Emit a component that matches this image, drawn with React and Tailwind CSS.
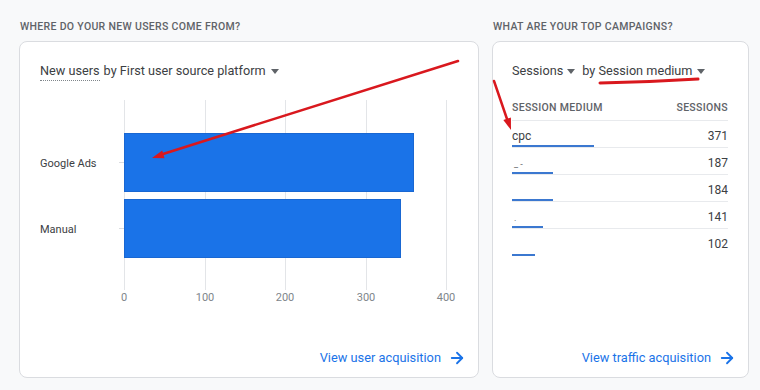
import { ArrowRight } from 'lucide-react';

const sources = [
    { label: 'Google Ads', value: 360 },
    { label: 'Manual', value: 344 },
];

const axis = [
    { value: 0, pos: 'left-[84px]' },
    { value: 100, pos: 'left-[165px]' },
    { value: 200, pos: 'left-[245px]' },
    { value: 300, pos: 'left-[326px]' },
    { value: 400, pos: 'left-[406px]' },
];

const campaigns = [
    { medium: 'cpc', sessions: 371 },
    { medium: '', mark: '_  -', sessions: 187 },
    { medium: '', sessions: 184 },
    { medium: '', mark: '.', sessions: 141 },
    { medium: '', sessions: 102 },
];

const Caret = () => (
    <span className="inline-block w-0 h-0 border-x-[4px] border-x-transparent border-t-[5px] border-t-[#5f6368]" />
);

const FooterLink = ({ children }) => (
    <div className="mt-auto flex justify-end items-center gap-[7px] pb-[9px] text-[12.8px] leading-[20px] text-[#1a73e8]">
        <span>{children}</span>
        <ArrowRight size={18} strokeWidth={2.4} />
    </div>
);

const App = () => {
    return (
        <div className="relative w-[760px] h-[390px] overflow-hidden bg-[#f8f9fa] font-['Roboto',sans-serif]">
            <div className="flex gap-[13px] pl-[19px] pt-[19px]">
                {/* New users */}
                <div className="w-[460px]">
                    <h2 className="pl-px text-[10.5px] leading-[16px] font-medium tracking-[0.03em] text-[#5f6368]">
                        WHERE DO YOUR NEW USERS COME FROM?
                    </h2>
                    <div className="mt-[6px] h-[337px] flex flex-col bg-white border border-[#dadce0] rounded-[8px] pl-[20px] pr-[12px] pt-[19px]">
                        <div className="flex items-center text-[12.7px] leading-[20px] text-[#3c4043]">
                            <span className="border-b border-dotted border-[#80868b] leading-[18px]">New users</span>
                            <span className="ml-[4px]">by First user source platform</span>
                            <span className="ml-[5px] flex items-center"><Caret /></span>
                        </div>

                        <div className="relative mt-[19px] h-[190px]">
                            {axis.map((a) => (
                                <div key={a.value} className={`absolute top-0 bottom-0 w-px bg-[#e3e5e8] ${a.pos}`} />
                            ))}
                            <div className="relative flex flex-col gap-[7px] pt-[33px]">
                                {sources.map((s) => (
                                    <div key={s.label} className="flex items-center h-[59px]">
                                        <span className="w-[79px] pt-[4px] text-[11px] text-[#3c4043]">{s.label}</span>
                                        <span className="w-[5px] h-px bg-[#dadce0]" />
                                        <div
                                            className="h-full bg-[#1a73e8] border border-[#1967d2]"
                                            style={{ width: `${s.value * 0.805}px` }}
                                        />
                                    </div>
                                ))}
                            </div>
                        </div>
                        <div className="relative h-[16px] text-[11px] leading-[16px] text-[#80868b]">
                            {axis.map((a) => (
                                <span key={a.value} className={`absolute top-0 -translate-x-1/2 ${a.pos}`}>{a.value}</span>
                            ))}
                        </div>

                        <FooterLink>View user acquisition</FooterLink>
                    </div>
                </div>

                {/* Campaigns */}
                <div className="w-[257px]">
                    <h2 className="pl-px text-[10.5px] leading-[16px] font-medium tracking-[0.03em] text-[#5f6368]">
                        WHAT ARE YOUR TOP CAMPAIGNS?
                    </h2>
                    <div className="mt-[6px] h-[337px] flex flex-col bg-white border border-[#dadce0] rounded-[8px] pl-[19px] pr-[12px] pt-[19px]">
                        <div className="flex items-center text-[12.7px] leading-[20px] text-[#3c4043]">
                            <span>Sessions</span>
                            <span className="ml-[4px] flex items-center"><Caret /></span>
                            <span className="ml-[7px]">by Session medium</span>
                            <span className="ml-[4px] flex items-center"><Caret /></span>
                        </div>

                        <div className="mr-[8px]">
                            <div className="mt-[19px] flex justify-between pb-[4px] border-b border-[#e8eaed] text-[10.5px] leading-[16px] font-medium tracking-[0.03em] text-[#5f6368]">
                                <span>SESSION MEDIUM</span>
                                <span>SESSIONS</span>
                            </div>
                            {campaigns.map((c, i) => (
                                <div
                                    key={i}
                                    className={`h-[27px] flex flex-col ${i < campaigns.length - 1 ? 'border-b border-[#e8eaed]' : ''}`}
                                >
                                    <div className="flex justify-between pt-[7px] text-[12px] leading-[16px] text-[#3c4043]">
                                        <span>{c.medium || <span className="text-[9px] text-[#5f6368] pl-[2px]">{c.mark}</span>}</span>
                                        <span>{c.sessions}</span>
                                    </div>
                                    <div
                                        className="mt-auto h-[2px] bg-[#3b78d0]"
                                        style={{ width: `${(c.sessions / 371) * 82}px` }}
                                    />
                                </div>
                            ))}
                        </div>

                        <FooterLink>View traffic acquisition</FooterLink>
                    </div>
                </div>
            </div>

            {/* annotations */}
            <svg className="absolute inset-0 pointer-events-none" width="760" height="390" viewBox="0 0 760 390">
                <line x1="458" y1="61" x2="163" y2="154" stroke="#d9181e" strokeWidth="2.5" strokeLinecap="round" />
                <polygon points="152,158 164.6,158.2 162.2,150.6" fill="#d9181e" />
                <line x1="494" y1="81" x2="507" y2="119" stroke="#d9181e" strokeWidth="2.5" strokeLinecap="round" />
                <polygon points="511,130 510.9,117.4 503.3,120" fill="#d9181e" />
                <path d="M600 83 Q650 82 698 79" stroke="#d9181e" strokeWidth="3" fill="none" strokeLinecap="round" />
            </svg>
        </div>
    );
};

export default App;
